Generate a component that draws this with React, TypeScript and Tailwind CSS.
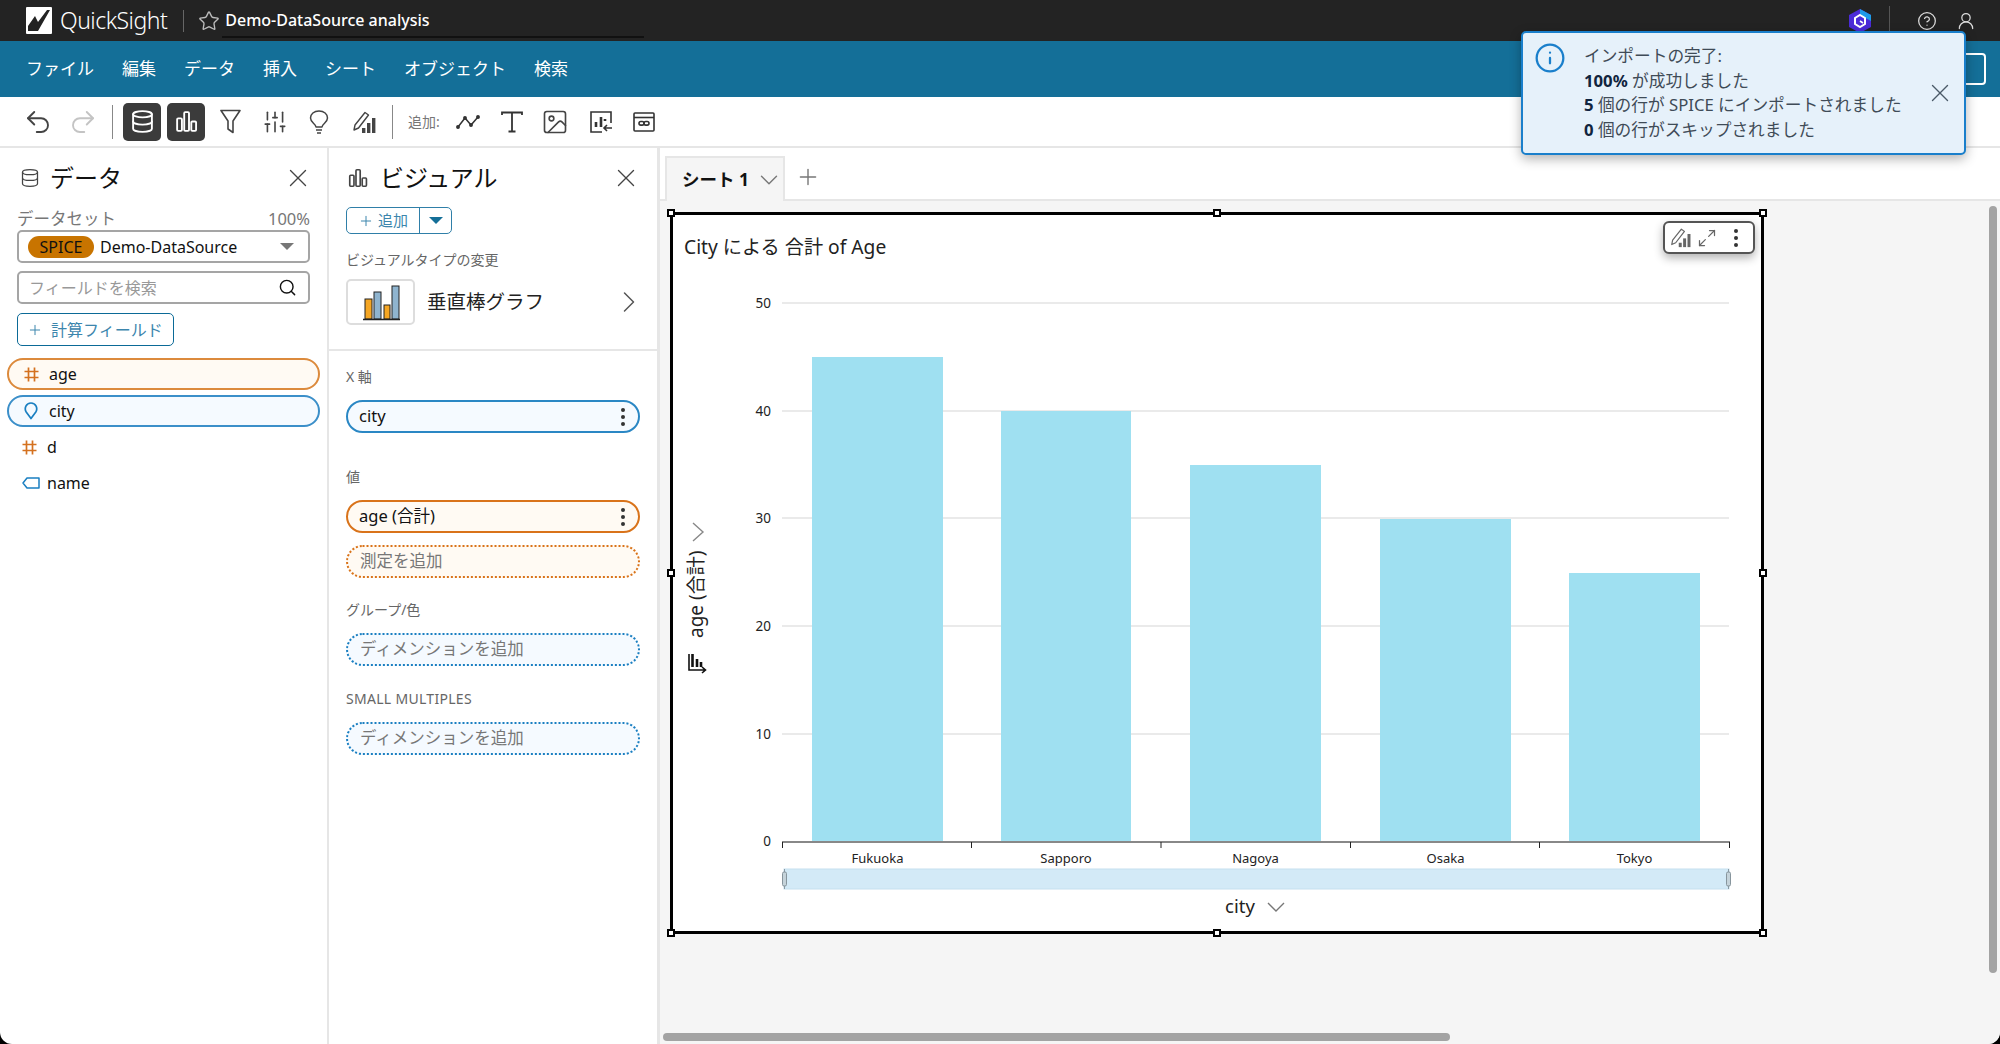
import { ChevronDown, ChevronRight, CircleHelp, Info, Plus, Search, SlidersVertical, UserRound, X, Star, Image, Undo2, Redo2, Database, Maximize2 } from "lucide-react";

const FONT = '"Noto Sans", "Noto Sans CJK JP", sans-serif';

const menus = ["ファイル", "編集", "データ", "挿入", "シート", "オブジェクト", "検索"];

const bars = [
  { name: "Fukuoka", x: 812, top: 357, w: 131 },
  { name: "Sapporo", x: 1001, top: 411, w: 130 },
  { name: "Nagoya", x: 1190, top: 465, w: 131 },
  { name: "Osaka", x: 1380, top: 519, w: 131 },
  { name: "Tokyo", x: 1569, top: 573, w: 131 },
];
const ticks = [
  { v: 50, y: 303 },
  { v: 40, y: 411 },
  { v: 30, y: 518 },
  { v: 20, y: 626 },
  { v: 10, y: 734 },
];

const BarsIcon = ({ className = "", size = 24 }: { className?: string; size?: number }) => (
  <svg width={size} height={size} viewBox="0 0 24 24" fill="none" stroke="currentColor" strokeWidth="1.8" className={className}>
    <rect x="3" y="9" width="4.6" height="12" rx="1" />
    <rect x="9.8" y="3" width="4.6" height="18" rx="1" />
    <rect x="16.6" y="12" width="4.6" height="9" rx="1" />
  </svg>
);

const PencilBars = ({ size = 24, color = "#444" }: { size?: number; color?: string }) => (
  <svg width={size} height={size} viewBox="0 0 24 24" fill="none">
    <path d="M2 20 L3 15 L13 2.5 L16.5 5 L6.5 18 Z" stroke={color} strokeWidth="1.4" strokeLinejoin="round" />
    <rect x="10" y="18" width="3.4" height="5" fill={color} />
    <rect x="15" y="13" width="3.4" height="10" fill={color} />
    <rect x="20" y="8" width="3.4" height="15" fill={color} />
  </svg>
);

const FunnelIcon = () => (
  <svg width="21" height="25" viewBox="0 0 21 25" fill="none" stroke="#444" strokeWidth="1.6" strokeLinejoin="round">
    <path d="M1 1.5 H20 L13 12 V23.5 L8 20 V12 Z" />
  </svg>
);

const BulbIcon = () => (
  <svg width="20" height="24" viewBox="0 0 20 24" fill="none" stroke="#444" strokeWidth="1.5">
    <path d="M7 17 C6.5 13.5 1.5 12.5 1.5 8 C1.5 4 5 1 10 1 C15 1 18.5 4 18.5 8 C18.5 12.5 13.5 13.5 13 17 Z" strokeLinejoin="round" />
    <path d="M7 20 H13 M8 23 H12" />
  </svg>
);

const LineIcon = () => (
  <svg width="24" height="16" viewBox="0 0 24 16" fill="none" stroke="#333" strokeWidth="1.5">
    <path d="M2 13 L9 4 L15 11 L22 3" />
    <circle cx="2" cy="13" r="1.2" fill="#333" />
    <circle cx="9" cy="4" r="1.2" fill="#333" />
    <circle cx="15" cy="11" r="1.2" fill="#333" />
    <circle cx="22" cy="3" r="1.2" fill="#333" />
  </svg>
);

const TextIcon = () => (
  <svg width="22" height="22" viewBox="0 0 22 22" fill="none" stroke="#333" strokeWidth="1.8">
    <path d="M1 4 V1.5 H21 V4 M11 1.5 V20.5 M7.5 20.5 H14.5" />
  </svg>
);

const ImportChartIcon = () => (
  <svg width="24" height="24" viewBox="0 0 24 24" fill="none" stroke="#333" strokeWidth="1.6">
    <path d="M13 22 H2 V2 H22 V13" />
    <path d="M7 17 V12 M12 17 V7 M16 11 V9" strokeWidth="2.6" />
    <path d="M23 18 H15 M18 15 L15 18 L18 21" />
  </svg>
);

const EmbedIcon = () => (
  <svg width="22" height="22" viewBox="0 0 22 22" fill="none" stroke="#333" strokeWidth="1.6">
    <rect x="1" y="2" width="20" height="18" rx="1" />
    <path d="M1 6.5 H21" />
    <rect x="6" y="10.5" width="5" height="3.6" rx="1.8" />
    <rect x="11" y="10.5" width="5" height="3.6" rx="1.8" />
  </svg>
);

const Logo = () => (
  <svg width="26" height="27" viewBox="0 0 26 27">
    <rect width="26" height="27" rx="1" fill="#fff" />
    <path d="M2 24 L2 19 L9 9 L12 15 L21 3 L24 3 L12 24 Z" fill="#232323" />
  </svg>
);

const HexIcon = () => (
  <svg width="24" height="26" viewBox="0 0 24 26">
    <path d="M12 1 L23 7 V19 L12 25 L1 19 V7 Z" fill="#4b2bd8" />
    <path d="M12 1 L23 7 V13 L12 7 Z" fill="#1e9be8" />
    <path d="M12 7 L17 10 V16 L12 19 L7 16 V10 Z" fill="none" stroke="#fff" strokeWidth="2" />
    <path d="M12 13 L15 15" stroke="#fff" strokeWidth="1.6" />
  </svg>
);

const VisualTypeIcon = () => (
  <svg width="38" height="38" viewBox="0 0 38 38" stroke="#222" strokeWidth="1">
    <rect x="3" y="16" width="7" height="20" fill="#f5a623" />
    <rect x="12" y="9" width="7" height="27" fill="#8fb4cf" />
    <rect x="22" y="22" width="6" height="14" fill="#f5a623" />
    <rect x="30" y="3" width="7" height="33" fill="#8fb4cf" />
    <path d="M1 36.5 H38" strokeWidth="1.4" />
  </svg>
);

const HashIcon = () => (
  <svg width="15" height="15" viewBox="0 0 15 15" fill="none" stroke="#d4711f" strokeWidth="1.7">
    <path d="M4.5 0.5 V14.5 M10.5 0.5 V14.5 M0.5 4.5 H14.5 M0.5 10.5 H14.5" />
  </svg>
);

const PinIcon = () => (
  <svg width="14" height="18" viewBox="0 0 14 18" fill="none" stroke="#1a7fc1" strokeWidth="1.7">
    <path d="M7 16.5 L2.2 10 C0 6.5 2 1 7 1 C12 1 14 6.5 11.8 10 Z" strokeLinejoin="round" />
  </svg>
);

const TagIcon = () => (
  <svg width="18" height="12" viewBox="0 0 18 12" fill="none" stroke="#1a7fc1" strokeWidth="1.5">
    <path d="M5 1 H17 V11 H5 L1 6 Z" strokeLinejoin="round" />
  </svg>
);

const Dots = () => (
  <span className="flex flex-col gap-[3px] items-center">
    <span className="w-[4px] h-[4px] rounded-full bg-[#333]" />
    <span className="w-[4px] h-[4px] rounded-full bg-[#333]" />
    <span className="w-[4px] h-[4px] rounded-full bg-[#333]" />
  </span>
);

const Handle = ({ className }: { className: string }) => (
  <span className={`absolute w-[8px] h-[8px] bg-white border-2 border-black ${className}`} />
);

const FieldRow = ({ icon, label, className }: { icon: React.ReactNode; label: string; className: string }) => (
  <div className={`mx-[7px] h-[32px] rounded-full flex items-center pl-[15px] text-[16px] text-[#111] ${className}`}>
    <span className="w-[25px] flex items-center">{icon}</span>
    {label}
  </div>
);

const WellLabel = ({ text, className }: { text: string; className: string }) => (
  <div className={`ml-[17px] text-[14px] leading-[20px] text-[#666] ${className}`}>{text}</div>
);

const Pill = ({ label, className }: { label: string; className: string }) => (
  <div className={`mx-[17px] h-[33px] rounded-full border-2 flex items-center justify-between pl-[11px] pr-[13px] text-[16.5px] text-[#111] ${className}`}>
    {label}
    <Dots />
  </div>
);

const Dashed = ({ label, className }: { label: string; className: string }) => (
  <div className={`mx-[17px] h-[33px] rounded-full border-2 border-dotted flex items-center pl-[12px] text-[16.5px] text-[#777] ${className}`}>
    {label}
  </div>
);

const Chart = () => (
  <svg width="1088" height="716" viewBox="673 215 1088 716" className="block" fontFamily={FONT}>
    {ticks.map((t) => (
      <g key={t.v}>
        <line x1="782" x2="1729" y1={t.y} y2={t.y} stroke="#e3e3e3" strokeWidth="1.5" />
        <text x="771" y={t.y + 5} fontSize="13.5" textAnchor="end" fill="#222">{t.v}</text>
      </g>
    ))}
    <text x="771" y="846" fontSize="13.5" textAnchor="end" fill="#222">0</text>
    {bars.map((b) => (
      <g key={b.name}>
        <rect x={b.x} y={b.top} width={b.w} height={841 - b.top} fill="#9fe0f1" />
        <text x={b.x + b.w / 2} y="863" fontSize="13" textAnchor="middle" fill="#222">{b.name}</text>
      </g>
    ))}
    <line x1="782" x2="1730" y1="842" y2="842" stroke="#888" strokeWidth="2" />
    {[782.5, 971.5, 1161, 1350.5, 1539.5, 1729.5].map((x) => (
      <line key={x} x1={x} x2={x} y1="842" y2="848" stroke="#222" strokeWidth="1" />
    ))}
    <rect x="784" y="869" width="945" height="20" fill="#d3eaf7" stroke="#c5e0ef" />
    {[784.5, 1728.5].map((x) => (
      <g key={x}>
        <line x1={x} x2={x} y1="869" y2="889" stroke="#8a9aa3" />
        <rect x={x - 2} y="872" width="4" height="14" rx="1.5" fill="#c5d3da" stroke="#87959d" />
      </g>
    ))}
    <text x="1240" y="913" fontSize="18.5" textAnchor="middle" fill="#222">city</text>
    <path d="M1268 903 L1276 911 L1284 903" fill="none" stroke="#777" strokeWidth="1.4" />
    <path d="M693 523 L703 532 L693 541" fill="none" stroke="#888" strokeWidth="1.4" />
    <text transform="translate(703 638) rotate(-90)" fontSize="19" fill="#222">age (合計)</text>
    <g fill="none" stroke="#111" strokeWidth="1.6">
      <path d="M689 654 V670 H705 M702 667 L705.5 670 L702 673" />
      <path d="M692.5 654 V667" strokeWidth="2.6" />
      <path d="M697 659 V667" strokeWidth="2.6" />
      <path d="M701 662 V667" strokeWidth="2.6" />
    </g>
  </svg>
);

export default function App() {
  return (
    <div className="w-[2000px] h-[1044px] bg-black overflow-hidden relative" style={{ fontFamily: FONT }}>
      <div className="h-full bg-white rounded-b-[12px] overflow-hidden flex flex-col">
        <header className="h-[41px] shrink-0 bg-[#232323] flex items-center text-white">
          <span className="ml-[26px]"><Logo /></span>
          <span className="ml-[8px] text-[23px] font-light tracking-[-0.5px] leading-none">QuickSight</span>
          <span className="ml-[16px] w-px h-[22px] bg-[#666]" />
          <Star className="ml-[14px] text-[#bbb]" size={22} strokeWidth={1.5} />
          <div className="ml-[2px] w-[422px] pl-[3px] h-[30px] mt-[4px] border-b-2 border-[#111] text-[16px] font-medium leading-[24px]">
            Demo-DataSource analysis
          </div>
          <span className="ml-auto"><HexIcon /></span>
          <span className="ml-[17px] w-px h-[30px] bg-[#555]" />
          <CircleHelp className="ml-[27px] text-[#ddd]" size={20} strokeWidth={1.5} />
          <UserRound className="ml-[19px] mr-[24px] text-[#ddd]" size={20} strokeWidth={1.5} />
        </header>

        <nav className="h-[56px] shrink-0 bg-[#146f98] flex items-center pl-[26px] pr-[14px] gap-[28px] text-white text-[17px]">
          {menus.map((m) => (
            <span key={m} className="whitespace-nowrap">{m}</span>
          ))}
          <span className="ml-auto w-[60px] h-[32px] border-2 border-white rounded-[4px]" />
        </nav>

        <div className="h-[51px] shrink-0 border-b-2 border-[#e6e6e6] flex items-center pl-[23px] text-[#444]">
          <Undo2 size={30} strokeWidth={1.5} />
          <Redo2 className="ml-[15px] text-[#c4c4c4]" size={30} strokeWidth={1.5} />
          <span className="ml-[14px] w-px h-[34px] bg-[#888]" />
          <span className="ml-[10px] w-[38px] h-[38px] rounded-[5px] bg-[#3b3b3b] flex items-center justify-center text-white">
            <Database size={25} strokeWidth={1.8} />
          </span>
          <span className="ml-[6px] w-[38px] h-[38px] rounded-[5px] bg-[#3b3b3b] flex items-center justify-center text-white">
            <BarsIcon size={25} />
          </span>
          <span className="ml-[15px]"><FunnelIcon /></span>
          <SlidersVertical className="ml-[21px]" size={26} strokeWidth={1.5} />
          <span className="ml-[21px]"><BulbIcon /></span>
          <span className="ml-[23px]"><PencilBars /></span>
          <span className="ml-[16px] w-px h-[34px] bg-[#888]" />
          <span className="ml-[15px] text-[14px] text-[#777] whitespace-nowrap">追加:</span>
          <span className="ml-[16px]"><LineIcon /></span>
          <span className="ml-[21px]"><TextIcon /></span>
          <Image className="ml-[18px]" size={28} strokeWidth={1.4} />
          <span className="ml-[20px]"><ImportChartIcon /></span>
          <span className="ml-[20px]"><EmbedIcon /></span>
        </div>

        <div className="flex-1 flex min-h-0">
          {/* data panel */}
          <aside className="w-[329px] shrink-0 border-r-2 border-[#e6e6e6]">
            <div className="h-[58px] flex items-center pl-[20px] pr-[14px] pt-[1px]">
              <Database size={20} strokeWidth={1.5} className="text-[#444]" />
              <span className="ml-[10px] text-[24px] text-[#111]">データ</span>
              <X className="ml-auto text-[#444]" size={30} strokeWidth={1.1} />
            </div>
            <div className="mx-[17px] flex justify-between text-[16.5px] leading-[24px] text-[#777] mt-[1px] -mb-[1px]">
              <span>データセット</span>
              <span>100%</span>
            </div>
            <div className="mx-[17px] h-[33px] border-2 border-[#a5a5a5] rounded-[5px] flex items-center pl-[9px] pr-[14px] text-[16px] text-[#111]">
              <span className="w-[66px] h-[22px] rounded-full bg-[#c87400] flex items-center justify-center text-[16px] leading-none">SPICE</span>
              <span className="ml-[6px]">Demo-DataSource</span>
              <span className="ml-auto w-0 h-0 border-x-[7px] border-x-transparent border-t-[7px] border-t-[#777]" />
            </div>
            <div className="mx-[17px] mt-[8px] h-[33px] border-2 border-[#a5a5a5] rounded-[5px] flex items-center pl-[10px] pr-[11px] text-[16px] text-[#999]">
              フィールドを検索
              <Search className="ml-auto text-[#111]" size={19} strokeWidth={1.8} />
            </div>
            <div className="ml-[17px] mt-[9px] w-[157px] h-[33px] border-[1.5px] border-[#0b6a97] rounded-[5px] flex items-center pl-[9px] text-[16px] text-[#3c86ad]">
              <Plus size={16} strokeWidth={1.5} />
              <span className="ml-[8px]">計算フィールド</span>
            </div>
            <div className="mt-[12px] flex flex-col gap-[5px]">
              <FieldRow icon={<HashIcon />} label="age" className="border-2 border-[#dc8a3c] bg-[#fffaf3]" />
              <FieldRow icon={<PinIcon />} label="city" className="border-2 border-[#3b8fc9] bg-[#f5faff]" />
            </div>
            <div className="mt-[4px]">
              <FieldRow icon={<HashIcon />} label="d" className="mt-[1px]" />
              <FieldRow icon={<TagIcon />} label="name" className="mt-[4px]" />
            </div>
          </aside>

          {/* visual panel */}
          <aside className="w-[331px] shrink-0 border-r-[3px] border-[#e6e6e6] flex flex-col">
            <div className="h-[58px] shrink-0 flex items-center pl-[18px] pr-[16px] pt-[1px]">
              <BarsIcon size={22} className="text-[#444]" />
              <span className="ml-[11px] text-[24px] text-[#111]">ビジュアル</span>
              <X className="ml-auto text-[#444]" size={30} strokeWidth={1.1} />
            </div>
            <div className="ml-[17px] w-[106px] h-[27px] mt-[1px] border-[1.5px] border-[#2f7fa8] rounded-[5px] flex items-center text-[15px] text-[#3c86ad]">
              <span className="w-[73px] border-r-[1.5px] border-[#2f7fa8] h-full flex items-center justify-center gap-[4px]">
                <Plus size={16} strokeWidth={1.5} />追加
              </span>
              <span className="flex-1 flex justify-center">
                <span className="w-0 h-0 border-x-[7px] border-x-transparent border-t-[7px] border-t-[#146f98]" />
              </span>
            </div>
            <WellLabel text="ビジュアルタイプの変更" className="mt-[16px]" />
            <div className="ml-[17px] mr-[23px] mt-[9px] flex items-center">
              <span className="w-[69px] h-[46px] border-2 border-[#ddd] rounded-[5px] flex items-center justify-center">
                <VisualTypeIcon />
              </span>
              <span className="ml-[12px] text-[19.5px] text-[#222]">垂直棒グラフ</span>
              <ChevronRight className="ml-auto -mr-[13px] text-[#555]" size={36} strokeWidth={1} />
            </div>
            <div className="mt-[24px] h-[2px] bg-[#e6e6e6]" />
            <WellLabel text="X 軸" className="mt-[16px]" />
            <Pill label="city" className="mt-[13px] border-[#2a87c4] bg-[#f5faff]" />
            <WellLabel text="値" className="mt-[34px]" />
            <Pill label="age (合計)" className="mt-[13px] border-[#d9731a] bg-[#fffaf3]" />
            <Dashed label="測定を追加" className="mt-[12px] border-[#d9731a] bg-[#fffaf3]" />
            <WellLabel text="グループ/色" className="mt-[22px]" />
            <Dashed label="ディメンションを追加" className="mt-[13px] border-[#1a7fc1] bg-[#f5faff]" />
            <WellLabel text="SMALL MULTIPLES" className="mt-[23px] tracking-[0.3px]" />
            <Dashed label="ディメンションを追加" className="mt-[13px] border-[#1a7fc1] bg-[#f5faff]" />
          </aside>

          {/* canvas */}
          <main className="flex-1 min-w-0 flex flex-col relative bg-[#f5f5f5]">
            <div className="h-[53px] shrink-0 bg-white border-b-2 border-[#e6e6e6] flex items-end pl-[5px]">
              <div className="w-[120px] h-[45px] -mb-[2px] bg-[#f5f5f5] border-2 border-b-0 border-[#e6e6e6] flex items-center pl-[15px] text-[17.5px] font-bold text-[#111]">
                <span className="whitespace-nowrap">シート 1</span>
                <ChevronDown className="ml-[5px] -mr-[4px] shrink-0 text-[#777]" size={30} strokeWidth={1.1} />
              </div>
              <Plus className="ml-[10px] mb-[9px] text-[#777]" size={26} strokeWidth={1.3} />
            </div>
            <div className="flex-1 pl-[10px] pt-[11px]">
              <div className="relative w-[1094px] h-[722px] bg-white border-[3px] border-black">
                <div className="absolute left-[11px] top-[19px] text-[19.2px] leading-[26px] text-[#222]">City による 合計 of Age</div>
                <Chart />
                <div className="absolute right-[6px] top-[6px] w-[92px] h-[33px] bg-white border-2 border-[#555] rounded-[6px] shadow-[0_4px_10px_rgba(0,0,0,0.3)] flex items-center pl-[5px]">
                  <PencilBars size={21} color="#666" />
                  <Maximize2 className="ml-[6px] text-[#666]" size={20} strokeWidth={1.5} />
                  <span className="ml-[17px]"><Dots /></span>
                </div>
                <Handle className="-left-[6px] -top-[6px]" />
                <Handle className="left-1/2 -translate-x-1/2 -top-[6px]" />
                <Handle className="-right-[6px] -top-[6px]" />
                <Handle className="-left-[6px] top-1/2 -translate-y-1/2" />
                <Handle className="-right-[6px] top-1/2 -translate-y-1/2" />
                <Handle className="-left-[6px] -bottom-[6px]" />
                <Handle className="left-1/2 -translate-x-1/2 -bottom-[6px]" />
                <Handle className="-right-[6px] -bottom-[6px]" />
              </div>
            </div>
            <span className="absolute right-[3px] top-[58px] w-[8px] h-[767px] rounded-full bg-[#a3a3a3]" />
            <span className="absolute left-[3px] bottom-[3px] w-[787px] h-[8px] rounded-full bg-[#a3a3a3]" />
          </main>
        </div>
      </div>

      {/* import notification */}
      <div className="absolute left-[1521px] top-[31px] w-[445px] h-[124px] bg-[#e6f1fa] border-2 border-[#1a7fcb] rounded-[5px] shadow-[0_4px_12px_rgba(0,0,0,0.3)] flex text-[16.7px] leading-[24.6px] text-[#3f4b57]">
        <Info className="ml-[11px] mt-[9px] text-[#1a7fcb] shrink-0" size={32} strokeWidth={1.7} />
        <div className="ml-[18px] mt-[11px] whitespace-nowrap">
          <div>インポートの完了:</div>
          <div><b className="text-[#10243e]">100%</b> が成功しました</div>
          <div><b className="text-[#10243e]">5</b> 個の行が SPICE にインポートされました</div>
          <div><b className="text-[#10243e]">0</b> 個の行がスキップされました</div>
        </div>
        <X className="absolute right-[9px] top-[45px] text-[#4b5a68]" size={30} strokeWidth={1.1} />
      </div>
    </div>
  );
}
